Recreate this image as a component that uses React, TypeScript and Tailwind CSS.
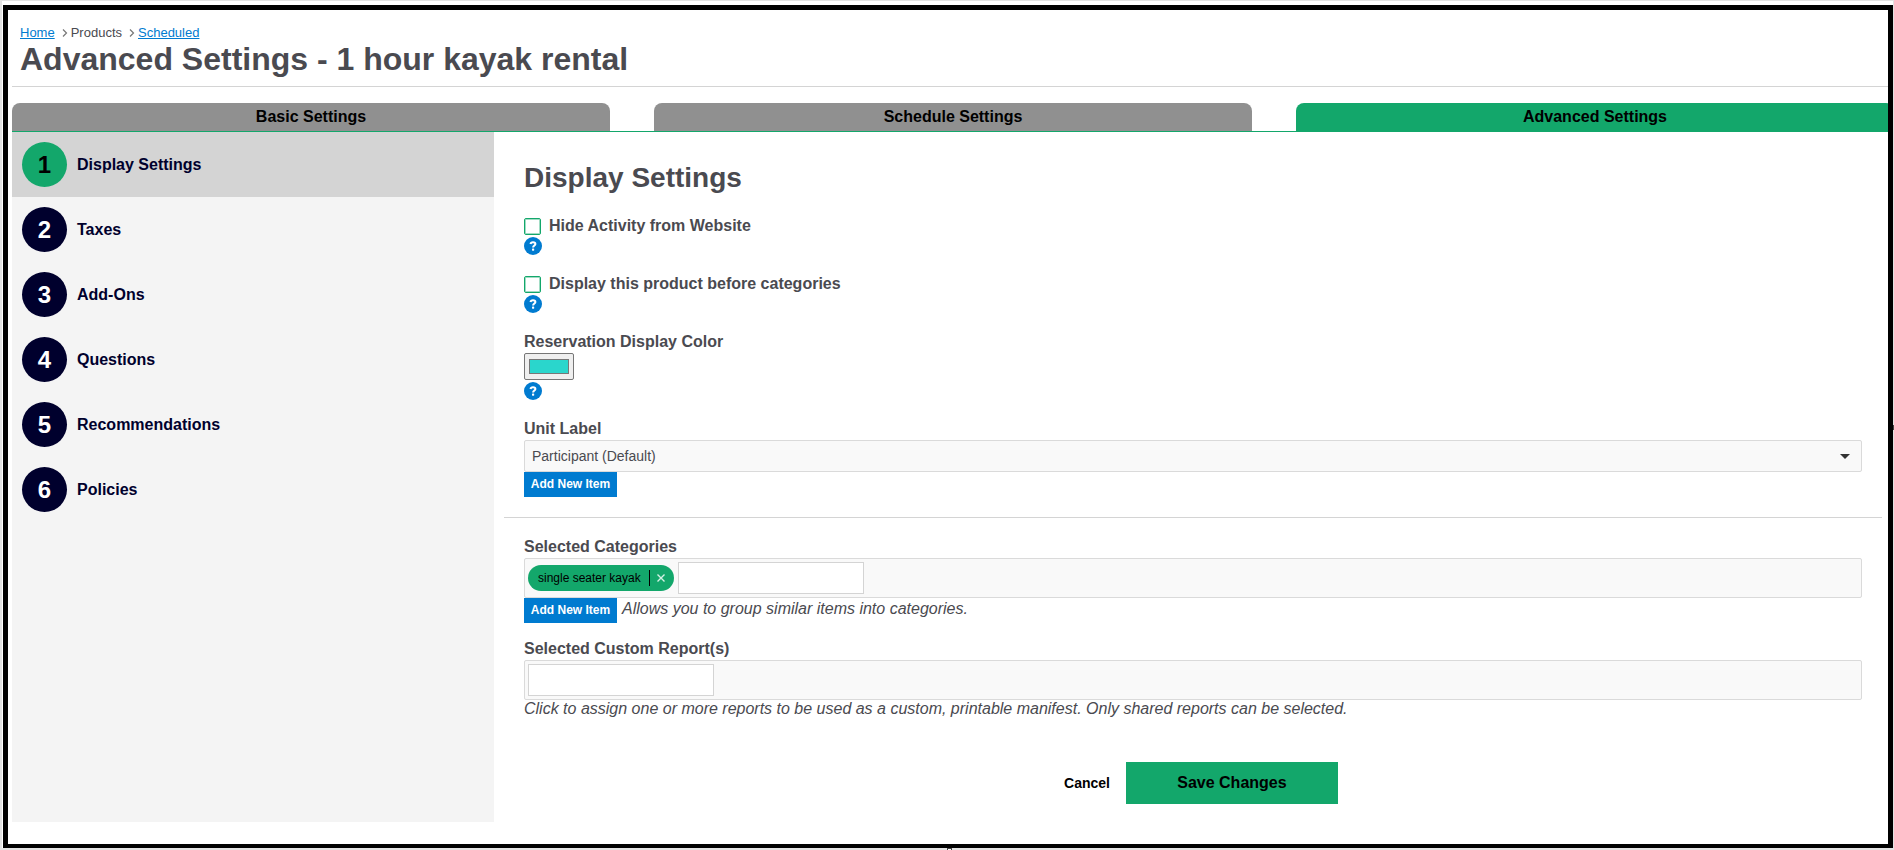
import { useState } from 'react';

const tabs = ['Basic Settings', 'Schedule Settings', 'Advanced Settings'];
const steps = ['Display Settings', 'Taxes', 'Add-Ons', 'Questions', 'Recommendations', 'Policies'];

function Chevron() {
  return (
    <svg className="w-1.5 h-2" fill="none" stroke="#777777" viewBox="0 0 6 8" aria-hidden="true">
      <path strokeWidth={1.2} d="M1 0.5L4.5 4L1 7.5" />
    </svg>
  );
}

function HelpButton({ topic }: { topic: string }) {
  return (
    <button type="button" title={`Help: ${topic}`} className="block w-[18px] h-[18px]">
      <svg className="w-[18px] h-[18px]" viewBox="0 0 18 18" fill="none" aria-hidden="true">
        <circle cx="9" cy="9" r="9" fill="#007bd0" />
        <path d="M6.5 7C6.7 5.7 7.6 5.2 9 5.2C10.5 5.2 11.4 5.9 11.4 7C11.4 8.5 9.1 8.6 9.1 10.5" stroke="#ffffff" strokeWidth="2" />
        <rect x="8" y="11.6" width="2.2" height="2.1" rx="0.6" fill="#ffffff" />
      </svg>
    </button>
  );
}

function CheckField({ label }: { label: string }) {
  const [checked, setChecked] = useState(false);
  return (
    <div className="mb-[19px]">
      <label className="flex items-start gap-2 mb-px font-bold">
        <input
          type="checkbox"
          checked={checked}
          onChange={(e) => setChecked(e.target.checked)}
          className="appearance-none w-[17px] h-[17px] mt-0.5 rounded-xs border border-[#13a76b] bg-white inset-ring inset-ring-[#13a76b]/40 checked:bg-[#13a76b]"
        />
        {label}
      </label>
      <HelpButton topic={label} />
    </div>
  );
}

function AddButton() {
  return (
    <button type="button" className="block h-[25px] w-[93px] pb-0.5 bg-[#007bd0] text-white text-xs font-bold">
      Add New Item
    </button>
  );
}

export default function App() {
  const [color, setColor] = useState('#2ad6cc');
  const [categories, setCategories] = useState(['single seater kayak']);

  return (
    <div className="relative min-h-screen flex bg-[#e2e2e2] pt-px pl-0.5 pb-0.5 pr-px font-['Liberation_Sans',Arial,sans-serif] text-base leading-5 text-[#4a4a50]">
      <div className="flex-1 flex bg-white pt-1 pl-px">
        <div className="flex-1 border-[5px] border-b-4 border-black overflow-hidden pl-1">
          <header className="pt-[13px] pl-2 pb-[11px] border-b border-[#d4d4d4]">
            <nav className="flex items-center gap-[3px] text-[13px] leading-5" aria-label="Breadcrumb">
              <a href="#home" className="text-[#007bd0] underline mr-1">Home</a>
              <Chevron />
              <span className="mr-1">Products</span>
              <Chevron />
              <a href="#scheduled" className="text-[#007bd0] underline">Scheduled</a>
            </nav>
            <h1 className="text-[32px] leading-8 font-bold">Advanced Settings - 1 hour kayak rental</h1>
          </header>

          {/* The tab strip runs slightly past the frame */}
          <nav className="flex gap-11 mt-4 -mr-1.5 border-b border-[#13a76b]">
            {tabs.map((tab) => (
              <button
                key={tab}
                type="button"
                className={`flex-1 h-7 rounded-t-lg font-bold text-black ${
                  tab === 'Advanced Settings' ? 'bg-[#13a76b]' : 'bg-[#909090]'
                }`}
              >
                {tab}
              </button>
            ))}
          </nav>

          <div className="flex">
            <aside className="w-[482px] shrink-0 bg-[#f4f4f4]">
              {steps.map((step, i) => (
                <a
                  key={step}
                  href={`#step-${i + 1}`}
                  className={`flex items-center gap-2.5 p-2.5 font-bold text-[#00002d] ${i === 0 ? 'bg-[#d4d4d4]' : ''}`}
                >
                  <span
                    className={`flex items-center justify-center w-[45px] h-[45px] rounded-full text-2xl font-bold ${
                      i === 0 ? 'bg-[#13a76b] text-black' : 'bg-[#00002d] text-white'
                    }`}
                  >
                    {i + 1}
                  </span>
                  {step}
                </a>
              ))}
            </aside>

            <main className="flex-1 pl-2.5 pr-1.5 pb-[18px]">
              <div className="px-5 pt-7">
                <h2 className="text-[28px] leading-9 font-bold mb-5">Display Settings</h2>
                <CheckField label="Hide Activity from Website" />
                <CheckField label="Display this product before categories" />

                <div className="mb-[19px]">
                  <label htmlFor="color" className="block mb-px font-bold">Reservation Display Color</label>
                  <input
                    id="color"
                    type="color"
                    value={color}
                    onChange={(e) => setColor(e.target.value)}
                    className="block w-[50px] h-[27px] mb-0.5 px-0.5 py-px border border-[#767676] rounded-xs bg-[#efefef]"
                  />
                  <HelpButton topic="Reservation Display Color" />
                </div>

                <div className="mb-5">
                  <label htmlFor="unit" className="block mb-px font-bold">Unit Label</label>
                  <div className="relative">
                    <select
                      id="unit"
                      className="block appearance-none w-full h-8 px-[7px] text-sm rounded-xs border border-[#dadada] bg-[#f9f9f9]"
                    >
                      <option>Participant (Default)</option>
                    </select>
                    <svg className="absolute right-3 top-3.5 w-2.5 h-[5px] pointer-events-none" viewBox="0 0 10 5" aria-hidden="true">
                      <path d="M0 0H10L5 5Z" fill="#333333" />
                    </svg>
                  </div>
                  <AddButton />
                </div>
              </div>

              <hr className="border-[#d4d4d4]" />

              <div className="px-5 pt-[19px]">
                <label htmlFor="categories" className="block mb-px font-bold">Selected Categories</label>
                <div className="flex items-center gap-1 h-10 px-[3px] rounded-xs border border-[#dadada] bg-[#f9f9f9]">
                  {categories.map((category) => (
                    <span key={category} className="flex items-center h-[26px] pl-2.5 rounded-full bg-[#13a76b] text-black text-xs">
                      {category}
                      <button
                        type="button"
                        title={`Remove ${category}`}
                        onClick={() => setCategories(categories.filter((c) => c !== category))}
                        className="ml-2 h-4 pl-[7px] pr-[9px] border-l border-black"
                      >
                        <svg className="w-2 h-2" viewBox="0 0 8 8" stroke="#d5f1e5" strokeWidth={1.4} aria-hidden="true">
                          <path d="M0.5 0.5L7.5 7.5M7.5 0.5L0.5 7.5" />
                        </svg>
                      </button>
                    </span>
                  ))}
                  <input id="categories" type="text" className="w-[186px] h-8 px-2 border border-[#d4d4d4] bg-white" />
                </div>
                <div className="flex items-start gap-[5px] mb-4">
                  <AddButton />
                  <em className="pt-px">Allows you to group similar items into categories.</em>
                </div>

                <label htmlFor="reports" className="block mb-px font-bold">Selected Custom Report(s)</label>
                <div className="flex items-center h-10 px-[3px] rounded-xs border border-[#dadada] bg-[#f9f9f9]">
                  <input id="reports" type="text" className="w-[186px] h-8 px-2 border border-[#d4d4d4] bg-white" />
                </div>
                <em className="block leading-[18px]">
                  Click to assign one or more reports to be used as a custom, printable manifest. Only shared reports can be selected.
                </em>

                <div className="flex items-center justify-center mt-11">
                  <button type="button" className="px-4 text-sm font-bold text-black">Cancel</button>
                  <button type="submit" className="w-[212px] h-[42px] bg-[#13a76b] font-bold text-black">Save Changes</button>
                </div>
              </div>
            </main>
          </div>
        </div>
      </div>

      {/* Resize handles on the frame edge */}
      <span className="absolute bottom-0 left-1/2 w-[5px] h-0.5 border border-b-0 border-[#444444] bg-white" />
      <span className="absolute right-0 top-1/2 w-px h-[5px] bg-[#444444]" />
    </div>
  );
}
